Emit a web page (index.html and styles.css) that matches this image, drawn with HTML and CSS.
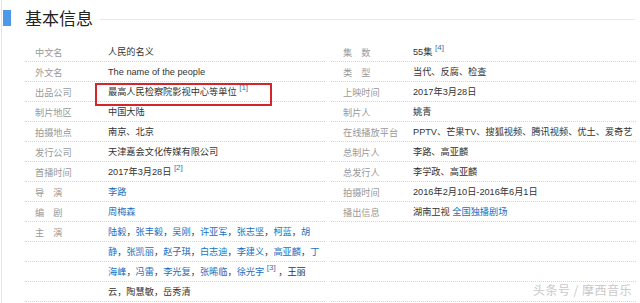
FILE: index.html
```html
<!DOCTYPE html>
<html lang="zh-CN">
<head>
<meta charset="utf-8">
<link rel="stylesheet" href="styles.css">
</head>
<body>
<div class="page">
  <div class="head">
    <span class="bar"></span>
    <h2 class="title">基本信息</h2>
    <span class="rule"></span>
  </div>
  <div class="cols">
    <dl class="col left">
      <div class="row"><dt>中文名</dt><dd>人民的名义</dd></div>
      <div class="row"><dt>外文名</dt><dd>The name of the people</dd></div>
      <div class="row"><dt>出品公司</dt><dd class="boxed">最高人民检察院影视中心等单位 <sup>[1]</sup><span class="mark"></span></dd></div>
      <div class="row"><dt>制片地区</dt><dd>中国大陆</dd></div>
      <div class="row"><dt>拍摄地点</dt><dd>南京、北京</dd></div>
      <div class="row"><dt>发行公司</dt><dd>天津嘉会文化传媒有限公司</dd></div>
      <div class="row"><dt>首播时间</dt><dd>2017年3月28日 <sup>[2]</sup></dd></div>
      <div class="row"><dt>导　演</dt><dd><a>李路</a></dd></div>
      <div class="row"><dt>编　剧</dt><dd><a>周梅森</a></dd></div>
      <div class="row"><dt>主　演</dt><dd><a>陆毅</a>，<a>张丰毅</a>，<a>吴刚</a>，<a>许亚军</a>，<a>张志坚</a>，<a>柯蓝</a>，<a>胡</a></dd></div>
      <div class="row"><dt></dt><dd><a>静</a>，<a>张凯丽</a>，<a>赵子琪</a>，<a>白志迪</a>，<a>李建义</a>，<a>高亚麟</a>，<a>丁</a></dd></div>
      <div class="row"><dt></dt><dd><a>海峰</a>，<a>冯雷</a>，<a>李光复</a>，<a>张晞临</a>，<a>徐光宇</a> <sup>[3]</sup> ，王丽</dd></div>
      <div class="row"><dt></dt><dd>云，陶慧敏，岳秀清</dd></div>
    </dl>
    <dl class="col right">
      <div class="row"><dt>集　数</dt><dd>55集 <sup>[4]</sup></dd></div>
      <div class="row"><dt>类　型</dt><dd>当代、反腐、检查</dd></div>
      <div class="row"><dt>上映时间</dt><dd>2017年3月28日</dd></div>
      <div class="row"><dt>制片人</dt><dd>姚青</dd></div>
      <div class="row"><dt>在线播放平台</dt><dd>PPTV、芒果TV、搜狐视频、腾讯视频、优土、爱奇艺</dd></div>
      <div class="row"><dt>总制片人</dt><dd>李路、高亚麟</dd></div>
      <div class="row"><dt>总发行人</dt><dd>李学政、高亚麟</dd></div>
      <div class="row"><dt>拍摄时间</dt><dd>2016年2月10日-2016年6月1日</dd></div>
      <div class="row"><dt>播出信息</dt><dd>湖南卫视 <a>全国独播剧场</a></dd></div>
      <div class="row"><dt></dt><dd></dd></div>
      <div class="row"><dt></dt><dd></dd></div>
      <div class="row"><dt></dt><dd></dd></div>
      <div class="row"><dt></dt><dd></dd></div>
    </dl>
  </div>
  <div class="watermark">头条号 / 摩西音乐</div>
</div>
</body>
</html>
```
FILE: styles.css
```css
html, body {
  margin: 0;
  padding: 0;
  background: #fff;
}
body {
  width: 640px;
  height: 303px;
  overflow: hidden;
  font-family: "Liberation Sans", "Noto Sans CJK SC", sans-serif;
  font-size: 9.2px;
  color: #333;
}
.page {
  position: relative;
  height: 303px;
  margin-left: 1px;
  border-left: 1px solid #e4e4e4;
}
.head {
  display: flex;
  align-items: center;
  height: 16px;
  padding-top: 10px;
}
.bar {
  width: 8px;
  height: 16px;
  margin-left: 1px;
  background: #4d98e8;
}
.title {
  margin: 0 0 0 14px;
  font-family: "Noto Sans CJK SC", sans-serif;
  font-size: 17px;
  font-weight: normal;
  line-height: 16px;
  color: #222;
}
.rule {
  flex: 1;
  height: 1px;
  margin: 2px 5px 0 7px;
  background: #e8e8e8;
}
.cols {
  display: flex;
  margin-top: 16px;
  padding-left: 23px;
}
.col {
  margin: 0;
}
.left {
  width: 300px;
}
.right {
  width: 305px;
  margin-left: 6px;
}
.row {
  display: flex;
  box-sizing: content-box;
  height: 17px;
  padding-top: 2px;
  border-bottom: 1px dotted #d6d6d6;
  line-height: 17px;
}
dt {
  flex: none;
  color: #999;
  font-family: "Noto Sans CJK SC", sans-serif;
}
.left dt {
  width: 73px;
  padding-left: 10px;
}
.right dt {
  width: 70px;
  padding-left: 12px;
}
dd {
  margin: 0;
  white-space: nowrap;
}
a {
  color: #1b6fc2;
}
sup {
  color: #3a6fb5;
  font-size: 8px;
  vertical-align: 5px;
  line-height: 0;
}
.boxed {
  position: relative;
}
.mark {
  position: absolute;
  left: -13px;
  top: -1px;
  width: 173px;
  height: 19px;
  border: 2px solid #d6242b;
}
.watermark {
  position: absolute;
  right: 8px;
  bottom: 5px;
  font-family: "Noto Sans CJK SC", sans-serif;
  font-size: 12px;
  color: #c9c9c9;
  letter-spacing: 0.5px;
}
```
